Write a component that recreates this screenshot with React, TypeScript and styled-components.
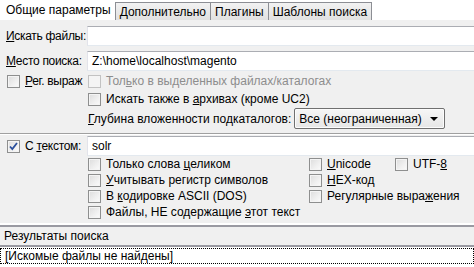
import React from 'react'
import styled, { createGlobalStyle } from 'styled-components'

const GlobalStyle = createGlobalStyle`
  html, body {
    margin: 0;
    padding: 0;
    background: #ffffff;
  }
  body {
    font-family: 'Liberation Sans', Arial, sans-serif;
    font-size: 12px;
    color: #000000;
  }
`

const Window = styled.div`
  width: 474px;
  height: 267px;
  overflow: hidden;
  display: flex;
  flex-direction: column;
`

const TabBar = styled.div`
  display: flex;
  align-items: flex-end;
  height: 20px;
  background: #ffffff;
`

const Tab = styled.div<{ $active?: boolean }>`
  height: ${(p) => (p.$active ? '20px' : '18px')};
  padding: 0 4px 0 ${(p) => (p.$active ? '6px' : '4px')};
  display: flex;
  align-items: center;
  box-sizing: border-box;
  white-space: nowrap;
  background: ${(p) => (p.$active ? '#ffffff' : 'linear-gradient(#f2f2f2, #e1e1e1)')};
  border: ${(p) => (p.$active ? 'none' : '1px solid #8c8e94')};
  border-bottom: none;
  margin-right: ${(p) => (p.$active ? '0' : '-1px')};
  min-width: ${(p) => (p.$active ? '114px' : '0')};
`

const Panel = styled.div`
  background: #f0f0f0;
  display: flex;
  flex-direction: column;
`

const Section = styled.div`
  padding: 6px 0 0 0;
  display: flex;
  flex-direction: column;
`

const FieldRow = styled.div<{ $gap?: number }>`
  display: grid;
  grid-template-columns: 87px 1fr;
  align-items: center;
  height: 20px;
  margin-bottom: ${(p) => p.$gap ?? 0}px;
`

const Label = styled.label`
  padding-left: 6px;
  white-space: nowrap;
  letter-spacing: -0.3px;
`

const TextInput = styled.div`
  height: 20px;
  box-sizing: border-box;
  background: #ffffff;
  border-top: 1px solid #abadb3;
  border-left: 1px solid #e2e3ea;
  border-bottom: 1px solid #e3e9ef;
  display: flex;
  align-items: center;
  padding-left: 4px;
  white-space: nowrap;
`

const CheckRow = styled.div<{ $indent?: number; $h?: number }>`
  display: flex;
  align-items: center;
  gap: 3px;
  height: ${(p) => p.$h ?? 18}px;
  padding-left: ${(p) => p.$indent ?? 0}px;
  white-space: nowrap;
`

const Box = styled.span<{ $disabled?: boolean }>`
  width: 13px;
  height: 13px;
  box-sizing: border-box;
  border: 1px solid ${(p) => (p.$disabled ? '#c2c2c2' : '#8e8f8f')};
  background: ${(p) =>
    p.$disabled
      ? '#f4f4f4'
      : 'linear-gradient(135deg, #dcdcdc 0%, #f0f0f0 60%, #fbfbfb 100%)'};
  box-shadow: inset 0 0 0 1px #f4f4f4;
  flex: none;
  display: flex;
  align-items: center;
  justify-content: center;
  margin-right: 2px;
`

const CheckText = styled.span<{ $disabled?: boolean }>`
  color: ${(p) => (p.$disabled ? '#8d8d8d' : '#000000')};
`

const U = styled.span`
  text-decoration: underline;
`

const TopOptions = styled.div`
  display: flex;
  align-items: center;
  height: 18px;
  margin-top: 1px;
`

const RegexCell = styled.div`
  width: 88px;
  display: flex;
  align-items: center;
  gap: 3px;
  padding-left: 7px;
  box-sizing: border-box;
  white-space: nowrap;
  letter-spacing: -0.3px;
`

const DepthRow = styled.div`
  display: flex;
  align-items: center;
  height: 21px;
  padding-left: 88px;
  gap: 3px;
`

const Select = styled.div`
  width: 151px;
  height: 21px;
  box-sizing: border-box;
  border: 1px solid #707070;
  border-radius: 2px;
  background: linear-gradient(#f6f6f6, #e6e6e6);
  display: flex;
  align-items: center;
  justify-content: space-between;
  padding: 0 6px 0 4px;
  box-shadow: inset 0 0 0 1px #fcfcfc;
`

const Arrow = styled.span`
  width: 0;
  height: 0;
  border-left: 4px solid transparent;
  border-right: 4px solid transparent;
  border-top: 4px solid #000000;
`

const Separator = styled.div`
  height: 2px;
  box-sizing: border-box;
  border-top: 1px solid #a0a0a0;
  border-bottom: 1px solid #ffffff;
  margin: 4px 0 1px 0;
`

const OptionsGrid = styled.div`
  display: grid;
  grid-template-columns: 221px 86px 1fr;
  grid-auto-rows: 16px;
  padding: 0 0 0 88px;
  margin-bottom: 3px;
`

const OptionCell = styled.div<{ $span?: number }>`
  display: flex;
  align-items: center;
  gap: 3px;
  white-space: nowrap;
  overflow: hidden;
  grid-column: span ${(p) => p.$span ?? 1};
`

const Splitter = styled.div`
  height: 4px;
  box-sizing: border-box;
  background: #ffffff;
  border-bottom: 2px solid #9a9aa2;
`

const ResultsHeader = styled.div`
  height: 20px;
  background: #f0f0f0;
  border-bottom: 2px solid #9a9aa2;
  display: flex;
  align-items: center;
  padding-left: 4px;
  box-sizing: border-box;
`

const ResultsList = styled.div`
  flex: 1;
  background: #ffffff;
  padding-top: 1px;
`

const ResultItem = styled.div`
  height: 16px;
  box-sizing: border-box;
  border: 1px dotted #000000;
  display: flex;
  align-items: center;
  padding-left: 4px;
`

const Check = () => (
  <svg width="9" height="9" viewBox="0 0 9 9">
    <path d="M1 4.5 L3.3 7 L8 1" fill="none" stroke="#2a4f9c" strokeWidth="1.8" />
  </svg>
)

export default function App() {
  return (
    <Window>
      <GlobalStyle />
      <TabBar>
        <Tab $active>Общие параметры</Tab>
        <Tab>Дополнительно</Tab>
        <Tab>Плагины</Tab>
        <Tab>Шаблоны поиска</Tab>
      </TabBar>
      <Panel>
        <Section>
          <FieldRow $gap={5}>
            <Label>
              <U>И</U>скать файлы:
            </Label>
            <TextInput />
          </FieldRow>
          <FieldRow>
            <Label>
              <U>М</U>есто поиска:
            </Label>
            <TextInput>Z:\home\localhost\magento</TextInput>
          </FieldRow>
          <TopOptions>
            <RegexCell>
              <Box />
              <span>
                <U>Р</U>ег. выраж
              </span>
            </RegexCell>
            <CheckRow>
              <Box $disabled />
              <CheckText $disabled>
                Тол<U>ь</U>ко в выделенных файлах/каталогах
              </CheckText>
            </CheckRow>
          </TopOptions>
          <CheckRow $indent={88}>
            <Box />
            <CheckText>
              Искать также в <U>а</U>рхивах (кроме UC2)
            </CheckText>
          </CheckRow>
          <DepthRow>
            <span>
              <U>Г</U>лубина вложенности подкаталогов:
            </span>
            <Select>
              <span>Все (неограниченная)</span>
              <Arrow />
            </Select>
          </DepthRow>
          <Separator />
          <FieldRow>
            <RegexCell>
              <Box>
                <Check />
              </Box>
              <span>
                С <U>т</U>екстом:
              </span>
            </RegexCell>
            <TextInput>solr</TextInput>
          </FieldRow>
          <OptionsGrid>
            <OptionCell>
              <Box />
              <span>
                Только слова <U>ц</U>еликом
              </span>
            </OptionCell>
            <OptionCell>
              <Box />
              <span>
                <U>U</U>nicode
              </span>
            </OptionCell>
            <OptionCell>
              <Box />
              <span>
                UTF-<U>8</U>
              </span>
            </OptionCell>
            <OptionCell>
              <Box />
              <span>
                <U>У</U>читывать регистр символов
              </span>
            </OptionCell>
            <OptionCell>
              <Box />
              <span>
                <U>Н</U>ЕХ-код
              </span>
            </OptionCell>
            <OptionCell />
            <OptionCell>
              <Box />
              <span>
                В <U>к</U>одировке ASCII (DOS)
              </span>
            </OptionCell>
            <OptionCell $span={2}>
              <Box />
              <span>
                Регулярные выра<U>ж</U>ения
              </span>
            </OptionCell>
            <OptionCell $span={3}>
              <Box />
              <span>
                Файлы, НЕ содержащие <U>э</U>тот текст
              </span>
            </OptionCell>
          </OptionsGrid>
        </Section>
      </Panel>
      <Splitter />
      <ResultsHeader>Результаты поиска</ResultsHeader>
      <ResultsList>
        <ResultItem>[Искомые файлы не найдены]</ResultItem>
      </ResultsList>
    </Window>
  )
}
